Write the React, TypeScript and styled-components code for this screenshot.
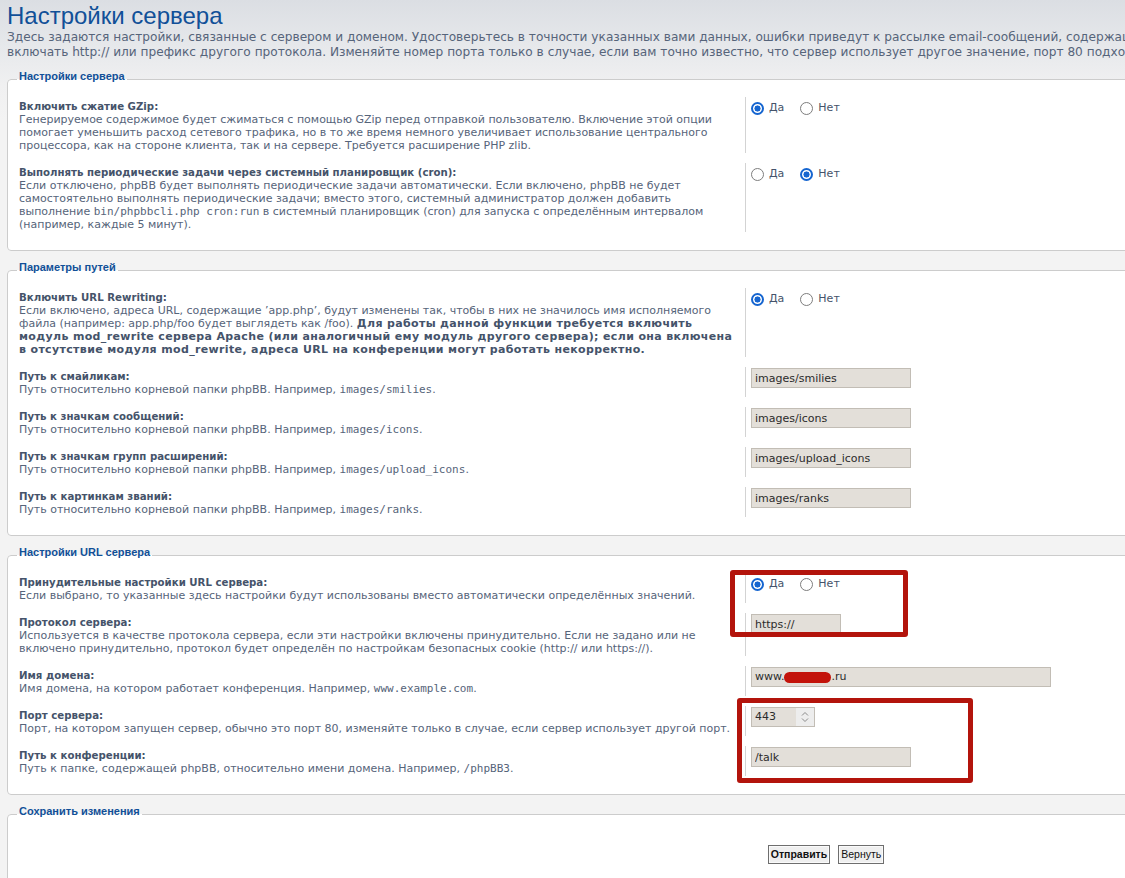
import React from "react";
import styled, { createGlobalStyle, css } from "styled-components";

const GlobalStyle = createGlobalStyle`
  html, body {
    margin: 0;
    padding: 0;
    overflow: hidden;
    background: #f3f3f3;
  }
  body {
    font-family: "DejaVu Sans", Verdana, sans-serif;
  }
`;

// 예시 화면은 가로로 잘려 있어서 페이지를 뷰포트보다 넓게 잡는다
const Page = styled.div`
  position: relative;
  width: 1638px;
  min-height: 100vh;
  padding: 0 7px;
  background: linear-gradient(to bottom, #dbdee3 0px, #e6e8eb 45px, #f0f0f1 85px, #f3f3f3 120px) no-repeat;
  background-color: #f3f3f3;
`;

const Title = styled.h1`
  margin: 0;
  padding-top: 2px;
  font: normal 24px/28px "Liberation Sans", Arial, sans-serif;
  color: #115098;
`;

const Intro = styled.p`
  margin: 0;
  font: 12.15px/15px "DejaVu Sans", Verdana, sans-serif;
  color: #56647a;
  white-space: nowrap;
`;

const Fieldset = styled.fieldset`
  margin: 9px 0 0;
  padding: 8px 11px 18px;
  min-width: 0;
  border: 1px solid #cccccc;
  border-radius: 4px;
  background: #ffffff;
`;

const SubmitFieldset = styled(Fieldset)`
  padding-bottom: 80px;
`;

const Buttons = styled.div`
  display: flex;
  justify-content: center;
  gap: 8px;
  padding-top: 13px;
`;

const Legend = styled.legend`
  margin-left: -2px;
  padding: 0 2px 6px;
  font: bold 11px/14px "Liberation Sans", Arial, sans-serif;
  color: #115098;
`;

const Row = styled.div`
  display: flex;
  margin-bottom: 10px;

  &:last-child {
    margin-bottom: 0;
  }
`;

const Dt = styled.div`
  width: 727px;
  flex: none;
  box-sizing: border-box;
  border-right: 1px solid #d3d3d3;
  padding: 3px 6px 1px 0;
  font-size: 11px;
  line-height: 13px;
  color: #56647a;
`;

const Label = styled.span`
  display: block;
  font-size: 10.2px;
  font-weight: bold;
  color: #45536a;
`;

const Desc = styled.span`
  display: block;
`;

const Strong = styled.b`
  color: #45536a;
  letter-spacing: 0.35px;
`;

const Mono = styled.span`
  font-family: "DejaVu Sans Mono", monospace;
  font-size: 11px;
`;

const Dd = styled.div`
  display: flex;
  align-items: flex-start;
  padding: 0 0 0 5px;
`;

const RadioLabel = styled.label`
  display: inline-flex;
  align-items: center;
  margin-right: 16px;
  padding-top: 3px;
  font-size: 11px;
  line-height: 15px;
  color: #45536a;
`;

const Radio = styled.input.attrs({ type: "radio" })`
  appearance: none;
  width: 13px;
  height: 13px;
  margin: 1px 5px 0 0;
  box-sizing: border-box;
  border-radius: 50%;
  border: 1.5px solid #7d7d7d;
  background: #fff;

  &:checked {
    border: 2px solid #1565d0;
    background: radial-gradient(circle, #1565d0 0 2.8px, #fff 3.3px);
  }
`;

const fieldLook = css`
  box-sizing: border-box;
  height: 20px;
  margin: 1px 0 0;
  padding: 0 3px;
  border: 1px solid #c2bdb5;
  background: #e3dfd9;
  font: 11px/18px "DejaVu Sans", Verdana, sans-serif;
  color: #2b2b2b;
`;

const TextInput = styled.input<{ $w: number }>`
  ${fieldLook}
  width: ${(p) => p.$w}px;
  outline: none;
`;

const FakeInput = styled.div<{ $w: number }>`
  ${fieldLook}
  width: ${(p) => p.$w}px;
  display: flex;
  align-items: center;
`;

const Redacted = styled.span`
  display: inline-block;
  width: 47px;
  height: 11px;
  border-radius: 6px;
  background: #c3130b;
`;

const NumberBox = styled.div`
  ${fieldLook}
  width: 64px;
  padding: 0 0 0 3px;
  display: flex;
  align-items: stretch;
`;

const NumberValue = styled.span`
  flex: 1;
  line-height: 18px;
`;

const Spinner = styled.span`
  width: 18px;
  background: #ededed;
  display: flex;
  flex-direction: column;
  align-items: center;
  justify-content: center;
  gap: 2px;
`;

const Annotation = styled.div<{ $x: number; $y: number; $w: number; $h: number }>`
  position: absolute;
  left: ${(p) => p.$x}px;
  top: ${(p) => p.$y}px;
  width: ${(p) => p.$w}px;
  height: ${(p) => p.$h}px;
  box-sizing: border-box;
  border: 5px solid #b3140c;
  border-radius: 3px;
  pointer-events: none;
`;

const Button = styled.button<{ $primary?: boolean }>`
  height: 19px;
  margin: 0;
  padding: 0 2px;
  border: 1px solid #6e6e6e;
  box-shadow: inset 0 0 0 1px #fafafa;
  background: #efefef;
  font: ${(p) => (p.$primary ? "bold" : "normal")} 10.5px/15px "Liberation Sans", Arial, sans-serif;
  color: #111;
`;

type YesNoProps = { name: string; yes: boolean };

const YesNo = ({ name, yes }: YesNoProps) => (
  <>
    <RadioLabel>
      <Radio name={name} defaultChecked={yes} />
      Да
    </RadioLabel>
    <RadioLabel>
      <Radio name={name} defaultChecked={!yes} />
      Нет
    </RadioLabel>
  </>
);

const Arrow = ({ up }: { up?: boolean }) => (
  <svg width="8" height="5" viewBox="0 0 8 5">
    <path
      d={up ? "M1 4.5 L4 1.5 L7 4.5" : "M1 0.5 L4 3.5 L7 0.5"}
      fill="none"
      stroke="#8a8a8a"
      strokeWidth="1"
    />
  </svg>
);

const pathRows = [
  { label: "Путь к смайликам:", example: "images/smilies" },
  { label: "Путь к значкам сообщений:", example: "images/icons" },
  { label: "Путь к значкам групп расширений:", example: "images/upload_icons" },
  { label: "Путь к картинкам званий:", example: "images/ranks" },
];

const App = () => {
  return (
    <Page>
      <GlobalStyle />
      <Title>Настройки сервера</Title>
      <Intro>
        Здесь задаются настройки, связанные с сервером и доменом. Удостоверьтесь в точности указанных вами данных, ошибки
        приведут к рассылке email-сообщений, содержащих неверную информацию. При вводе имени домена не забудьте, что оно не должно
        <br />
        включать http:// или префикс другого протокола. Изменяйте номер порта только в случае, если вам точно известно, что
        сервер использует другое значение, порт 80 подходит в большинстве случаев.
      </Intro>

      <Fieldset>
        <Legend>Настройки сервера</Legend>
        <Row>
          <Dt>
            <Label>Включить сжатие GZip:</Label>
            <Desc>
              Генерируемое содержимое будет сжиматься с помощью GZip перед отправкой пользователю. Включение этой опции
              помогает уменьшить расход сетевого трафика, но в то же время немного увеличивает использование центрального
              процессора, как на стороне клиента, так и на сервере. Требуется расширение PHP zlib.
            </Desc>
          </Dt>
          <Dd>
            <YesNo name="gzip" yes />
          </Dd>
        </Row>
        <Row>
          <Dt>
            <Label>Выполнять периодические задачи через системный планировщик (cron):</Label>
            <Desc>
              Если отключено, phpBB будет выполнять периодические задачи автоматически. Если включено, phpBB не будет
              самостоятельно выполнять периодические задачи; вместо этого, системный администратор должен добавить
              выполнение <Mono>bin/phpbbcli.php cron:run</Mono> в системный планировщик (cron) для запуска с определённым
              интервалом (например, каждые 5 минут).
            </Desc>
          </Dt>
          <Dd>
            <YesNo name="cron" yes={false} />
          </Dd>
        </Row>
      </Fieldset>

      <Fieldset>
        <Legend>Параметры путей</Legend>
        <Row>
          <Dt>
            <Label>Включить URL Rewriting:</Label>
            <Desc>
              Если включено, адреса URL, содержащие ’app.php’, будут изменены так, чтобы в них не значилось имя
              исполняемого файла (например: app.php/foo будет выглядеть как /foo).{" "}
              <Strong>
                Для работы данной функции требуется включить модуль mod_rewrite сервера Apache (или аналогичный ему модуль
                другого сервера); если она включена в отсутствие модуля mod_rewrite, адреса URL на конференции могут
                работать некорректно.
              </Strong>
            </Desc>
          </Dt>
          <Dd>
            <YesNo name="rewrite" yes />
          </Dd>
        </Row>
        {pathRows.map((r) => (
          <Row key={r.example}>
            <Dt>
              <Label>{r.label}</Label>
              <Desc>
                Путь относительно корневой папки phpBB. Например, <Mono>{r.example}</Mono>.
              </Desc>
            </Dt>
            <Dd>
              <TextInput $w={160} defaultValue={r.example} />
            </Dd>
          </Row>
        ))}
      </Fieldset>

      <Fieldset>
        <Legend>Настройки URL сервера</Legend>
        <Row>
          <Dt>
            <Label>Принудительные настройки URL сервера:</Label>
            <Desc>Если выбрано, то указанные здесь настройки будут использованы вместо автоматически определённых значений.</Desc>
          </Dt>
          <Dd>
            <YesNo name="force" yes />
          </Dd>
        </Row>
        <Row>
          <Dt>
            <Label>Протокол сервера:</Label>
            <Desc>
              Используется в качестве протокола сервера, если эти настройки включены принудительно. Если не задано или не
              включено принудительно, протокол будет определён по настройкам безопасных cookie (http:// или https://).
            </Desc>
          </Dt>
          <Dd>
            <TextInput $w={90} defaultValue="https://" />
          </Dd>
        </Row>
        <Row>
          <Dt>
            <Label>Имя домена:</Label>
            <Desc>
              Имя домена, на котором работает конференция. Например, <Mono>www.example.com</Mono>.
            </Desc>
          </Dt>
          <Dd>
            <FakeInput $w={300}>
              www.
              <Redacted />
              .ru
            </FakeInput>
          </Dd>
        </Row>
        <Row>
          <Dt>
            <Label>Порт сервера:</Label>
            <Desc>
              Порт, на котором запущен сервер, обычно это порт 80, изменяйте только в случае, если сервер использует другой
              порт.
            </Desc>
          </Dt>
          <Dd>
            <NumberBox>
              <NumberValue>443</NumberValue>
              <Spinner>
                <Arrow up />
                <Arrow />
              </Spinner>
            </NumberBox>
          </Dd>
        </Row>
        <Row>
          <Dt>
            <Label>Путь к конференции:</Label>
            <Desc>
              Путь к папке, содержащей phpBB, относительно имени домена. Например, <Mono>/phpBB3</Mono>.
            </Desc>
          </Dt>
          <Dd>
            <TextInput $w={160} defaultValue="/talk" />
          </Dd>
        </Row>
      </Fieldset>

      <SubmitFieldset>
        <Legend>Сохранить изменения</Legend>
        <Buttons>
          <Button $primary>Отправить</Button>
          <Button>Вернуть</Button>
        </Buttons>
      </SubmitFieldset>

      <Annotation $x={730} $y={570} $w={178} $h={67} />
      <Annotation $x={737} $y={698} $w={236} $h={85} />
    </Page>
  );
};

export default App;
